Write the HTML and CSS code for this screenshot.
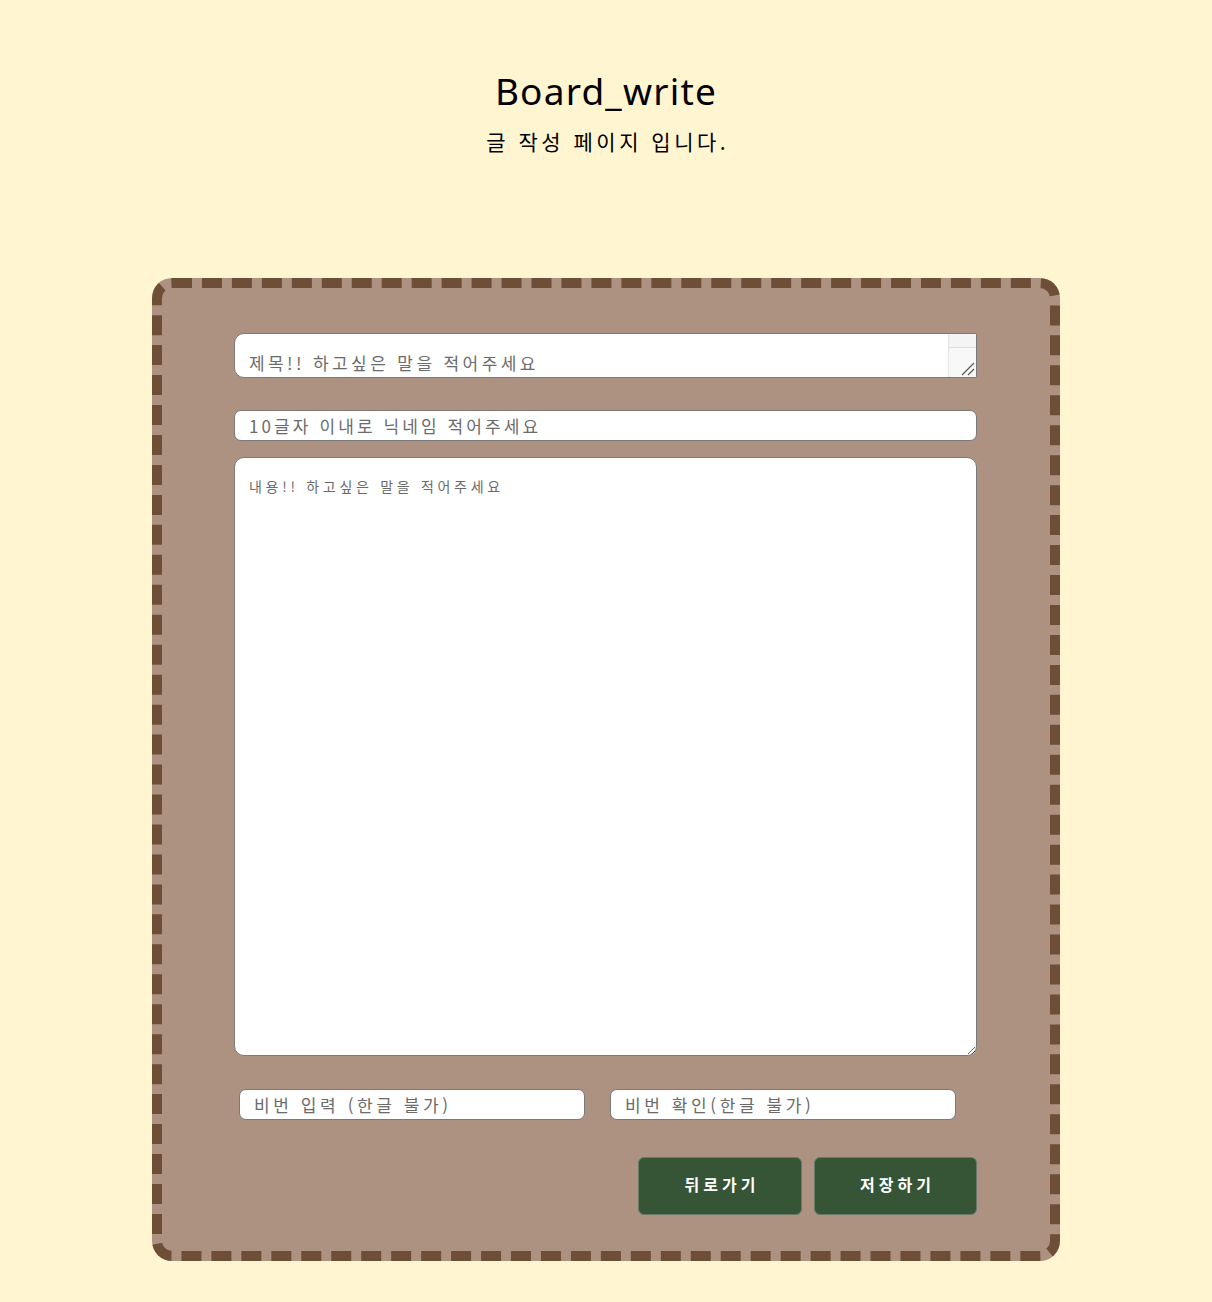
FILE: index.html
```html
<!DOCTYPE html>
<html lang="ko">
<head>
<meta charset="utf-8">
<title>Board_write</title>
<link rel="stylesheet" href="styles.css">
</head>
<body>
<header class="page-head">
  <h1 class="page-title">Board_write</h1>
  <p class="page-sub">글 작성 페이지 입니다.</p>
</header>
<main class="card">
  <form class="write-form">
    <div class="title-wrap">
      <textarea class="field title-field" placeholder="제목!! 하고싶은 말을 적어주세요"></textarea>
      <div class="fake-scroll" aria-hidden="true">
        <div class="fake-scroll-btn"></div>
        <svg class="fake-resizer" width="14" height="14" viewBox="0 0 14 14">
          <path d="M1 13 L13 1 M7 13 L13 7" stroke="#5a5a5a" stroke-width="1.3" fill="none"/>
        </svg>
      </div>
    </div>
    <input class="field nick-field" type="text" placeholder="10글자 이내로 닉네임 적어주세요">
    <textarea class="field content-field" placeholder="내용!! 하고싶은 말을 적어주세요"></textarea>
    <div class="pw-row">
      <input class="field pw-field" type="password" placeholder="비번 입력 (한글 불가)">
      <input class="field pw-field" type="password" placeholder="비번 확인(한글 불가)">
    </div>
    <div class="btn-row">
      <button type="button" class="btn btn-back">뒤로가기</button>
      <button type="button" class="btn btn-save">저장하기</button>
    </div>
  </form>
</main>
</body>
</html>
```

FILE: styles.css
```css
html, body {
  margin: 0;
  padding: 0;
}
body {
  background: #fff5d1;
  font-family: "Noto Sans CJK KR", "Noto Sans", sans-serif;
  color: #111;
  padding-bottom: 41px;
}
.page-head {
  text-align: center;
  padding-top: 66px;
  height: 278px;
  box-sizing: border-box;
}
.page-title {
  margin: 0;
  font-family: "Noto Sans", "Noto Sans CJK KR", sans-serif;
  font-weight: 400;
  font-size: 37px;
  line-height: 50px;
  letter-spacing: 1.2px;
  color: #000;
}
.page-sub {
  margin: 9px 0 0;
  font-size: 21px;
  line-height: 32px;
  letter-spacing: 3.5px;
  text-indent: 3.5px;
  color: #000;
}
.card {
  width: 908px;
  box-sizing: border-box;
  margin: 0 auto;
  background: #ad9282;
  border: 10px dashed #6f4e37;
  border-radius: 20px;
  padding: 45px 73px 36px 72px;
}
.write-form {
  display: flex;
  flex-direction: column;
}
.field {
  box-sizing: border-box;
  border: 1px solid #7a7a7a;
  background: #fff;
  font-family: "Noto Sans CJK KR", sans-serif;
  font-size: 17px;
  color: #333;
  outline: none;
  margin: 0;
}
.field::placeholder {
  color: #6b6b6b;
}
.title-wrap {
  position: relative;
  height: 45px;
}
.title-field {
  display: block;
  height: 45px;
  width: 100%;
  border-radius: 10px 2px 2px 10px;
  padding: 16px 44px 0 14px;
  line-height: 25px;
  letter-spacing: 3.4px;
  overflow: hidden;
  resize: none;
}
.fake-scroll {
  position: absolute;
  top: 1px;
  right: 1px;
  bottom: 1px;
  width: 28px;
  background: #f8f8f8;
  border-left: 1px solid #e2e2e2;
  box-sizing: border-box;
  pointer-events: none;
}
.fake-scroll-btn {
  height: 13px;
  border-bottom: 1px solid #dddddd;
  background: #f4f4f4;
}
.fake-resizer {
  position: absolute;
  right: 1px;
  bottom: 1px;
}
.nick-field {
  margin-top: 32px;
  height: 31px;
  width: 100%;
  border-radius: 7px;
  padding: 0 14px;
  letter-spacing: 3.1px;
}
.content-field {
  margin-top: 16px;
  height: 599px;
  width: 100%;
  border-radius: 10px;
  padding: 18px 14px;
  font-size: 14px;
  line-height: 20px;
  letter-spacing: 3.7px;
  resize: both;
}
.pw-row {
  display: flex;
  gap: 25px;
  margin-top: 33px;
  padding-left: 5px;
}
.pw-field {
  width: 346px;
  height: 31px;
  border-radius: 7px;
  padding: 0 14px;
  letter-spacing: 3.6px;
}
.btn-row {
  display: flex;
  justify-content: flex-end;
  gap: 12px;
  margin-top: 37px;
}
.btn {
  width: 164px;
  height: 58px;
  background: #355536;
  border: 1px solid #6b7a68;
  border-radius: 6px;
  color: #fff;
  font-family: "Noto Sans CJK KR", sans-serif;
  font-weight: 700;
  font-size: 16px;
  letter-spacing: 4px;
  text-indent: 4px;
  padding: 0 0 4px;
  cursor: pointer;
}
.btn-save {
  width: 163px;
}
```
